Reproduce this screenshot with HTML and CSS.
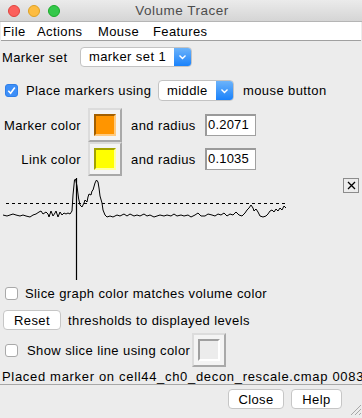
FILE: index.html
```html
<!DOCTYPE html>
<html>
<head>
<meta charset="utf-8">
<link rel="stylesheet" href="styles.css">
</head>
<body>
<div class="window">
  <div class="titlebar">
    <div class="lights">
      <span class="light red"></span>
      <span class="light yellow"></span>
      <span class="light green"></span>
    </div>
    <div class="title">Volume Tracer</div>
  </div>
  <div class="menubar">
    <span class="menu m-file">File</span>
    <span class="menu m-actions">Actions</span>
    <span class="menu m-mouse">Mouse</span>
    <span class="menu">Features</span>
  </div>

  <div class="row row-set">
    <span class="label">Marker set</span>
    <div class="select select-set"><span class="select-text">marker set 1</span><span class="select-arrow"><svg width="9" height="6" viewBox="0 0 9 6"><path d="M1.5 1.5 L4.5 4.5 L7.5 1.5" fill="none" stroke="#fff" stroke-width="1.4"/></svg></span></div>
  </div>

  <div class="row row-place">
    <span class="check checked"><svg width="11" height="11" viewBox="0 0 11 11"><path d="M2.3 5.8 L4.6 8.2 L8.8 2.6" fill="none" stroke="#fff" stroke-width="1.6"/></svg></span>
    <span class="label place-label">Place markers using</span>
    <div class="select select-mid"><span class="select-text">middle</span><span class="select-arrow"><svg width="9" height="6" viewBox="0 0 9 6"><path d="M1.5 1.5 L4.5 4.5 L7.5 1.5" fill="none" stroke="#fff" stroke-width="1.4"/></svg></span></div>
    <span class="label mouse-label">mouse button</span>
  </div>

  <div class="row row-color">
    <span class="label color-label">Marker color</span>
    <div class="colorbtn"><span class="swatch orange"></span></div>
    <span class="label radius-label">and radius</span>
    <div class="entry">0.2071</div>
  </div>

  <div class="row row-color">
    <span class="label color-label">Link color</span>
    <div class="colorbtn"><span class="swatch yellow"></span></div>
    <span class="label radius-label">and radius</span>
    <div class="entry">0.1035</div>
  </div>

  <div class="graph">
    <svg class="plot" width="362" height="106" viewBox="0 176 362 106">
      <line x1="6" y1="203.5" x2="286" y2="203.5" stroke="#000" stroke-width="1" stroke-dasharray="3,3"/>
      <line x1="76.5" y1="178" x2="76.5" y2="280" stroke="#000" stroke-width="1.2"/>
      <polyline fill="none" stroke="#000" stroke-width="1" points="3,215 7,216 10,215 13,214 16,215 20,216 23,215 26,216 30,217 33,215 36,214 39,212 41,211 43,214 46,212 48,214 49,217 51,211 53,216 55,213 56,211 58,217 60,212 62,215 64,213 66,214 68,213 70,214 72,211 73,195 74.5,180 75.5,179 77,186 78.5,198 80,205 82,207 84,203 85,200 87,202 88,197 89,194 91,195 92,191 93,190 95,183 96.5,180 98,182 99,188 100,196 102,203 103,210 105,215 107,217 110,216 113,217 117,215 120,216 124,214 127,216 130,214 134,216 137,215 140,216 144,214 147,216 150,215 154,217 157,216 160,215 164,216 167,215 171,216 174,214 177,216 181,215 184,216 188,215 191,217 195,215 198,213 201,216 205,216 208,214 212,215 215,216 218,214 221,215 224,213 227,216 230,214 233,215 236,212 239,215 242,216 245,213 247,210 249,208 251,205 253,208 254,211 256,209 258,212 260,216 263,217 266,216 268,214 270,211 272,210 274,212 276,209 278,211 280,208 282,210 284,206 286,208"/>
    </svg>
    <div class="closebox"><svg width="11" height="11" viewBox="0 0 11 11"><path d="M2 2 L9 9 M9 2 L2 9" stroke="#000" stroke-width="1.3"/></svg></div>
  </div>

  <div class="row row-slice">
    <span class="check"></span>
    <span class="label slice-label">Slice graph color matches volume color</span>
  </div>

  <div class="row row-reset">
    <div class="button reset">Reset</div>
    <span class="label thresh-label">thresholds to displayed levels</span>
  </div>

  <div class="row row-show">
    <span class="check"></span>
    <span class="label show-label">Show slice line using color</span>
    <div class="colorbtn empty"><span class="swatch white"></span></div>
  </div>

  <div class="status">Placed marker on cell44_ch0_decon_rescale.cmap 0083</div>

  <div class="footer">
    <div class="button close">Close</div>
    <div class="button help">Help</div>
    <svg class="grip" width="14" height="14" viewBox="0 0 14 14"><path d="M13 3 L3 13 M13 7 L7 13 M13 11 L11 13" stroke="#a8a8a8" stroke-width="1"/></svg>
  </div>
</div>
</body>
</html>
```

FILE: styles.css
```css
* { box-sizing: border-box; }
html, body {
  margin: 0;
  padding: 0;
  width: 362px;
  height: 418px;
  overflow: hidden;
  background: #ececec;
  font-family: "Liberation Sans", Arial, sans-serif;
  font-size: 13px;
  letter-spacing: 0.4px;
  color: #000;
}
.window { width: 362px; height: 418px; position: relative; }

.titlebar {
  height: 22px;
  background: linear-gradient(#ebebeb, #d5d5d5);
  border-bottom: 1px solid #b5b5b5;
  display: flex;
  align-items: center;
  justify-content: center;
  position: relative;
}
.lights {
  position: absolute;
  left: 8px;
  top: 5px;
  display: flex;
  gap: 8px;
}
.light { width: 12px; height: 12px; border-radius: 50%; display: block; }
.red { background: #fc605c; border: 1px solid #e0443e; }
.yellow { background: #fdbc40; border: 1px solid #dea123; }
.green { background: #34c84a; border: 1px solid #1aab29; }
.title { color: #4d4d4d; font-size: 13.5px; letter-spacing: 0.5px; padding-left: 2px; }

.menubar {
  height: 19px;
  margin: 0 1px;
  background: #fff;
  border-bottom: 1px solid #a0a0a0;
  display: flex;
  align-items: center;
  padding-left: 2px;
}
.menu { display: inline-block; }
.m-file { width: 34px; }
.m-actions { width: 61px; }
.m-mouse { width: 55px; }

.row { display: flex; align-items: center; }
.label { white-space: nowrap; }

.row-set { height: 22px; margin-top: 5px; padding-left: 2px; }
.row-set .label { width: 78px; }

.select {
  display: flex;
  height: 20px;
  background: #fff;
  border: 1px solid #c3c3c3;
  border-radius: 4px;
  overflow: hidden;
}
.select-text { flex: 1; padding-left: 8px; line-height: 18px; }
.select-arrow {
  width: 17px;
  background: linear-gradient(#6cb3fa, #1a82fb);
  display: flex;
  align-items: center;
  justify-content: center;
}
.select-set { width: 112px; }
.select-mid { width: 76px; height: 21px; }
.select-mid .select-text { line-height: 19px; }

.row-place { height: 23px; margin-top: 11px; padding-left: 5px; }
.check {
  width: 13px; height: 13px;
  border: 1px solid #a9a9a9;
  border-radius: 3px;
  background: #fff;
  display: flex; align-items: center; justify-content: center;
  flex: none;
}
.check.checked { background: #3d8ff8; border-color: #2f7fe8; }
.place-label { margin-left: 8px; width: 132px; }
.mouse-label { margin-left: 9px; }

.row-color { height: 34px; }
.row-place + .row-color { margin-top: 6px; }
.color-label { width: 86px; text-align: right; padding-right: 5px; }

.colorbtn {
  width: 34px; height: 34px;
  border: 2px solid;
  border-color: #dcdcdc #a9a9a9 #a9a9a9 #dcdcdc;
  background: #f4f4f4;
  padding: 4px;
  display: flex;
  margin-left: 2px;
}
.swatch { flex: 1; border: 2px solid; }
.orange { background: #ff9500; border-color: #a35f00 #ffca7f #ffca7f #a35f00; }
.swatch.yellow { background: #ffff00; border-color: #a3a300 #ffff9f #ffff9f #a3a300; }
.swatch.white { background: #ececec; border-color: #9f9f9f #fff #fff #9f9f9f; }
.radius-label { margin-left: 9px; width: 74px; }
.entry {
  width: 51px; height: 22px;
  background: #fff;
  border: 1px solid #a0a0a0;
  border-top: 2px solid #9a9a9a;
  border-left: 2px solid #9a9a9a;
  line-height: 18px;
  padding-left: 1px;
  letter-spacing: 0.2px;
}

.graph { height: 106px; position: relative; }
.plot { display: block; }
.closebox {
  position: absolute;
  left: 343px;
  top: 2px;
  width: 16px; height: 15px;
  border: 1px solid #8c8c8c;
  background: #ececec;
  display: flex; align-items: center; justify-content: center;
}

.row-slice { height: 18px; margin-top: 2px; padding-left: 5px; }
.slice-label { margin-left: 7px; }

.row-reset { height: 24px; margin-top: 6px; padding-left: 3px; }
.button {
  height: 20px;
  background: #fff;
  border: 1px solid #c6c6c6;
  border-radius: 4px;
  display: flex; align-items: center; justify-content: center;
}
.reset { width: 58px; }
.thresh-label { margin-left: 7px; }

.row-show { height: 34px; margin-top: 1px; padding-left: 5px; }
.show-label { margin-left: 9px; width: 165px; }
.colorbtn.empty { margin-left: 0; }

.status { height: 17px; line-height: 17px; padding-left: 2px; margin-top: 1px; white-space: nowrap; overflow: hidden; border-bottom: 1px solid #a8a8a8; letter-spacing: 0.68px; }

.footer {
  height: 31px;
  display: flex;
  align-items: center;
  padding-left: 228px;
  padding-bottom: 3px;
  position: relative;
}
.close { width: 56px; }
.help { width: 51px; margin-left: 7px; }
.grip { position: absolute; right: 0; bottom: 0; }
```
